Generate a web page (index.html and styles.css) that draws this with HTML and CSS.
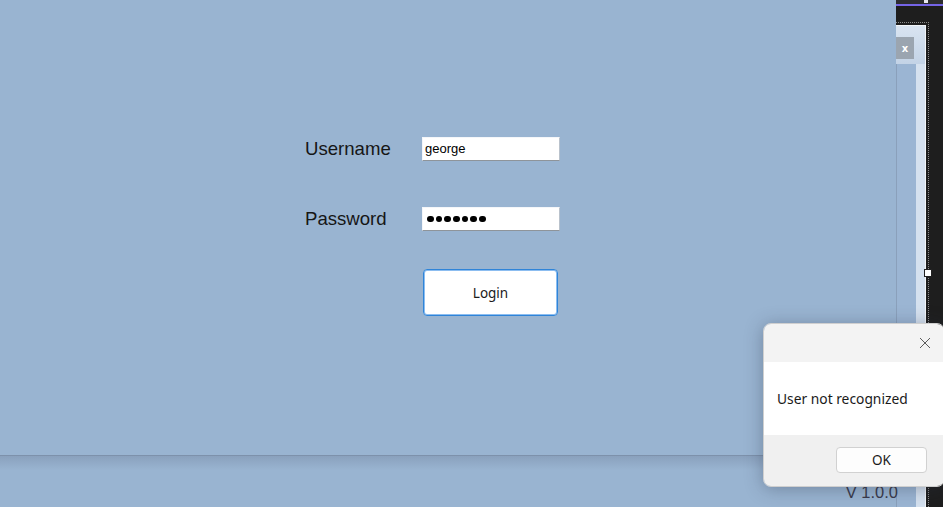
FILE: index.html
```html
<!DOCTYPE html>
<html>
<head>
<meta charset="utf-8">
<link rel="stylesheet" href="styles.css">
</head>
<body>
<div class="screen">
  <div class="app">
    <div class="panel">
      <div class="login">
        <div class="label">Username</div>
        <div class="input">george</div>
        <div class="label">Password</div>
        <div class="input pw"><i></i><i></i><i></i><i></i><i></i><i></i><i></i></div>
        <div></div>
        <button class="btn">Login</button>
      </div>
    </div>
    <div class="footer"><span class="version">V 1.0.0</span></div>
  </div>

  <div class="side">
    <div class="side-top"><span class="tab-mark"></span></div>
    <div class="frame">
      <div class="frame-head"><span class="fx">x</span></div>
      <div class="frame-body"><div class="frame-inner"></div></div>
    </div>
    <div class="handle"></div>
  </div>

  <div class="dialog">
    <div class="dlg-title">
      <svg class="dlg-close" width="12" height="12" viewBox="0 0 12 12"><path d="M1 1L11 11M11 1L1 11" stroke="#5c5c5c" stroke-width="1" fill="none"/></svg>
    </div>
    <div class="dlg-body">User not recognized</div>
    <div class="dlg-foot"><button class="ok">OK</button></div>
  </div>
</div>
</body>
</html>
```

FILE: styles.css
```css
* { box-sizing: border-box; }
html, body { margin: 0; padding: 0; }
body { width: 943px; height: 507px; overflow: hidden; background: #99b4d1; font-family: "Liberation Sans", Arial, sans-serif; }
.screen { position: relative; width: 943px; height: 507px; overflow: hidden; }

.app { display: flex; flex-direction: column; width: 943px; height: 507px; }
.panel { width: 897px; height: 456px; border-right: 1px solid #8aa0bb; border-bottom: 1px solid #7d91ab; padding: 137px 0 0 305px; }
.login { display: grid; grid-template-columns: 117px 138px; grid-template-rows: 24px 24px 47px; row-gap: 46px; align-items: center; }
.login .btn { align-self: start; }
.login > :nth-child(5) { height: 0; }
.label { font-size: 18.6px; color: #161616; line-height: 24px; }
.input { height: 24px; background: #fff; border-top: 1px solid #f4f6f9; border-left: 1px solid #f4f6f9; border-right: 1px solid #b9c2cc; border-bottom: 1px solid #8e949a; font-size: 13px; line-height: 21px; padding-left: 2px; color: #000; }
.pw { display: flex; align-items: center; gap: 2.2px; padding-left: 4px; }
.pw i { display: block; width: 6.5px; height: 6.5px; border-radius: 50%; background: #000; }
.btn { width: 135px; height: 47px; margin-left: 1px; margin-top: -8px; background: #fff; border: 1px solid #2f84d8; box-shadow: inset 0 0 0 1px #8cbdf0; border-radius: 4px; font-family: "Noto Sans", sans-serif; font-size: 13.5px; color: #1b1b1b; padding: 0; }

.footer { flex: 1; display: flex; justify-content: flex-end; align-items: flex-end; padding: 0 45px 5px 0; background: linear-gradient(#8aa1bd, #99b4d1 14px); }
.version { position: relative; z-index: 2; font-size: 16.5px; color: #3a3a4a; line-height: 20px; }

.side { position: absolute; left: 896px; top: 0; width: 47px; height: 507px; background: #1e1e1e; display: flex; flex-direction: column; }
.side-top { height: 25px; border-top: 4px solid #2d2d30; position: relative; }
.side-top::before { content: ""; position: absolute; left: 0; right: 0; top: 0; height: 2px; background: #7564e6; }
.side-top::after { content: ""; position: absolute; left: 0; width: 33px; top: 18px; height: 0; border-top: 1px dotted #8c8c8c; }
.tab-mark { position: absolute; left: 28px; top: -4px; width: 4px; height: 3px; background: #e8e8f0; }
.frame { flex: 1; width: 30px; border-right: 1px solid #f2f5f9; border-top: 1px solid #f2f5f9; display: flex; flex-direction: column; background: #d5e1ef; }
.frame-head { height: 38px; background: linear-gradient(#d9e4f1, #c3d3e6); padding-top: 11px; }
.fx { display: flex; align-items: center; justify-content: center; width: 18px; height: 22px; background: #9ba5b0; color: #fff; font-family: "DejaVu Sans", sans-serif; font-weight: bold; font-size: 10px; }
.frame-body { flex: 1; display: flex; }
.frame-inner { width: 20px; background: #9bb5d3; border-left: 1px solid #8aa0bb; }
.side::after { content: ""; position: absolute; left: 32px; top: 22px; bottom: 0; border-left: 1px dotted #8c8c8c; }
.handle { position: absolute; left: 28px; top: 269px; width: 8px; height: 8px; background: #fff; border: 1px solid #222; z-index: 2; }

.dialog { position: absolute; left: 763px; top: 323px; width: 182px; height: 164px; border-radius: 8px; border: 1px solid #cfcfcf; overflow: hidden; display: flex; flex-direction: column; box-shadow: 0 2px 18px rgba(40, 50, 70, 0.35); font-family: "Noto Sans", sans-serif; z-index: 3; }
.dlg-title { height: 38px; background: #f3f3f3; display: flex; justify-content: flex-end; align-items: center; padding-right: 13px; }
.dlg-body { height: 73px; background: #fff; display: flex; align-items: center; padding-left: 13px; font-size: 13.8px; color: #1a1a1a; }
.dlg-foot { flex: 1; background: #f0f0f0; display: flex; justify-content: flex-end; padding: 12px 17px 0 0; }
.ok { width: 91px; height: 26px; background: #fdfdfd; border: 1px solid #d1d1d1; border-radius: 4px; font-family: "Noto Sans", sans-serif; font-size: 13.5px; color: #1a1a1a; padding: 0; }
```
